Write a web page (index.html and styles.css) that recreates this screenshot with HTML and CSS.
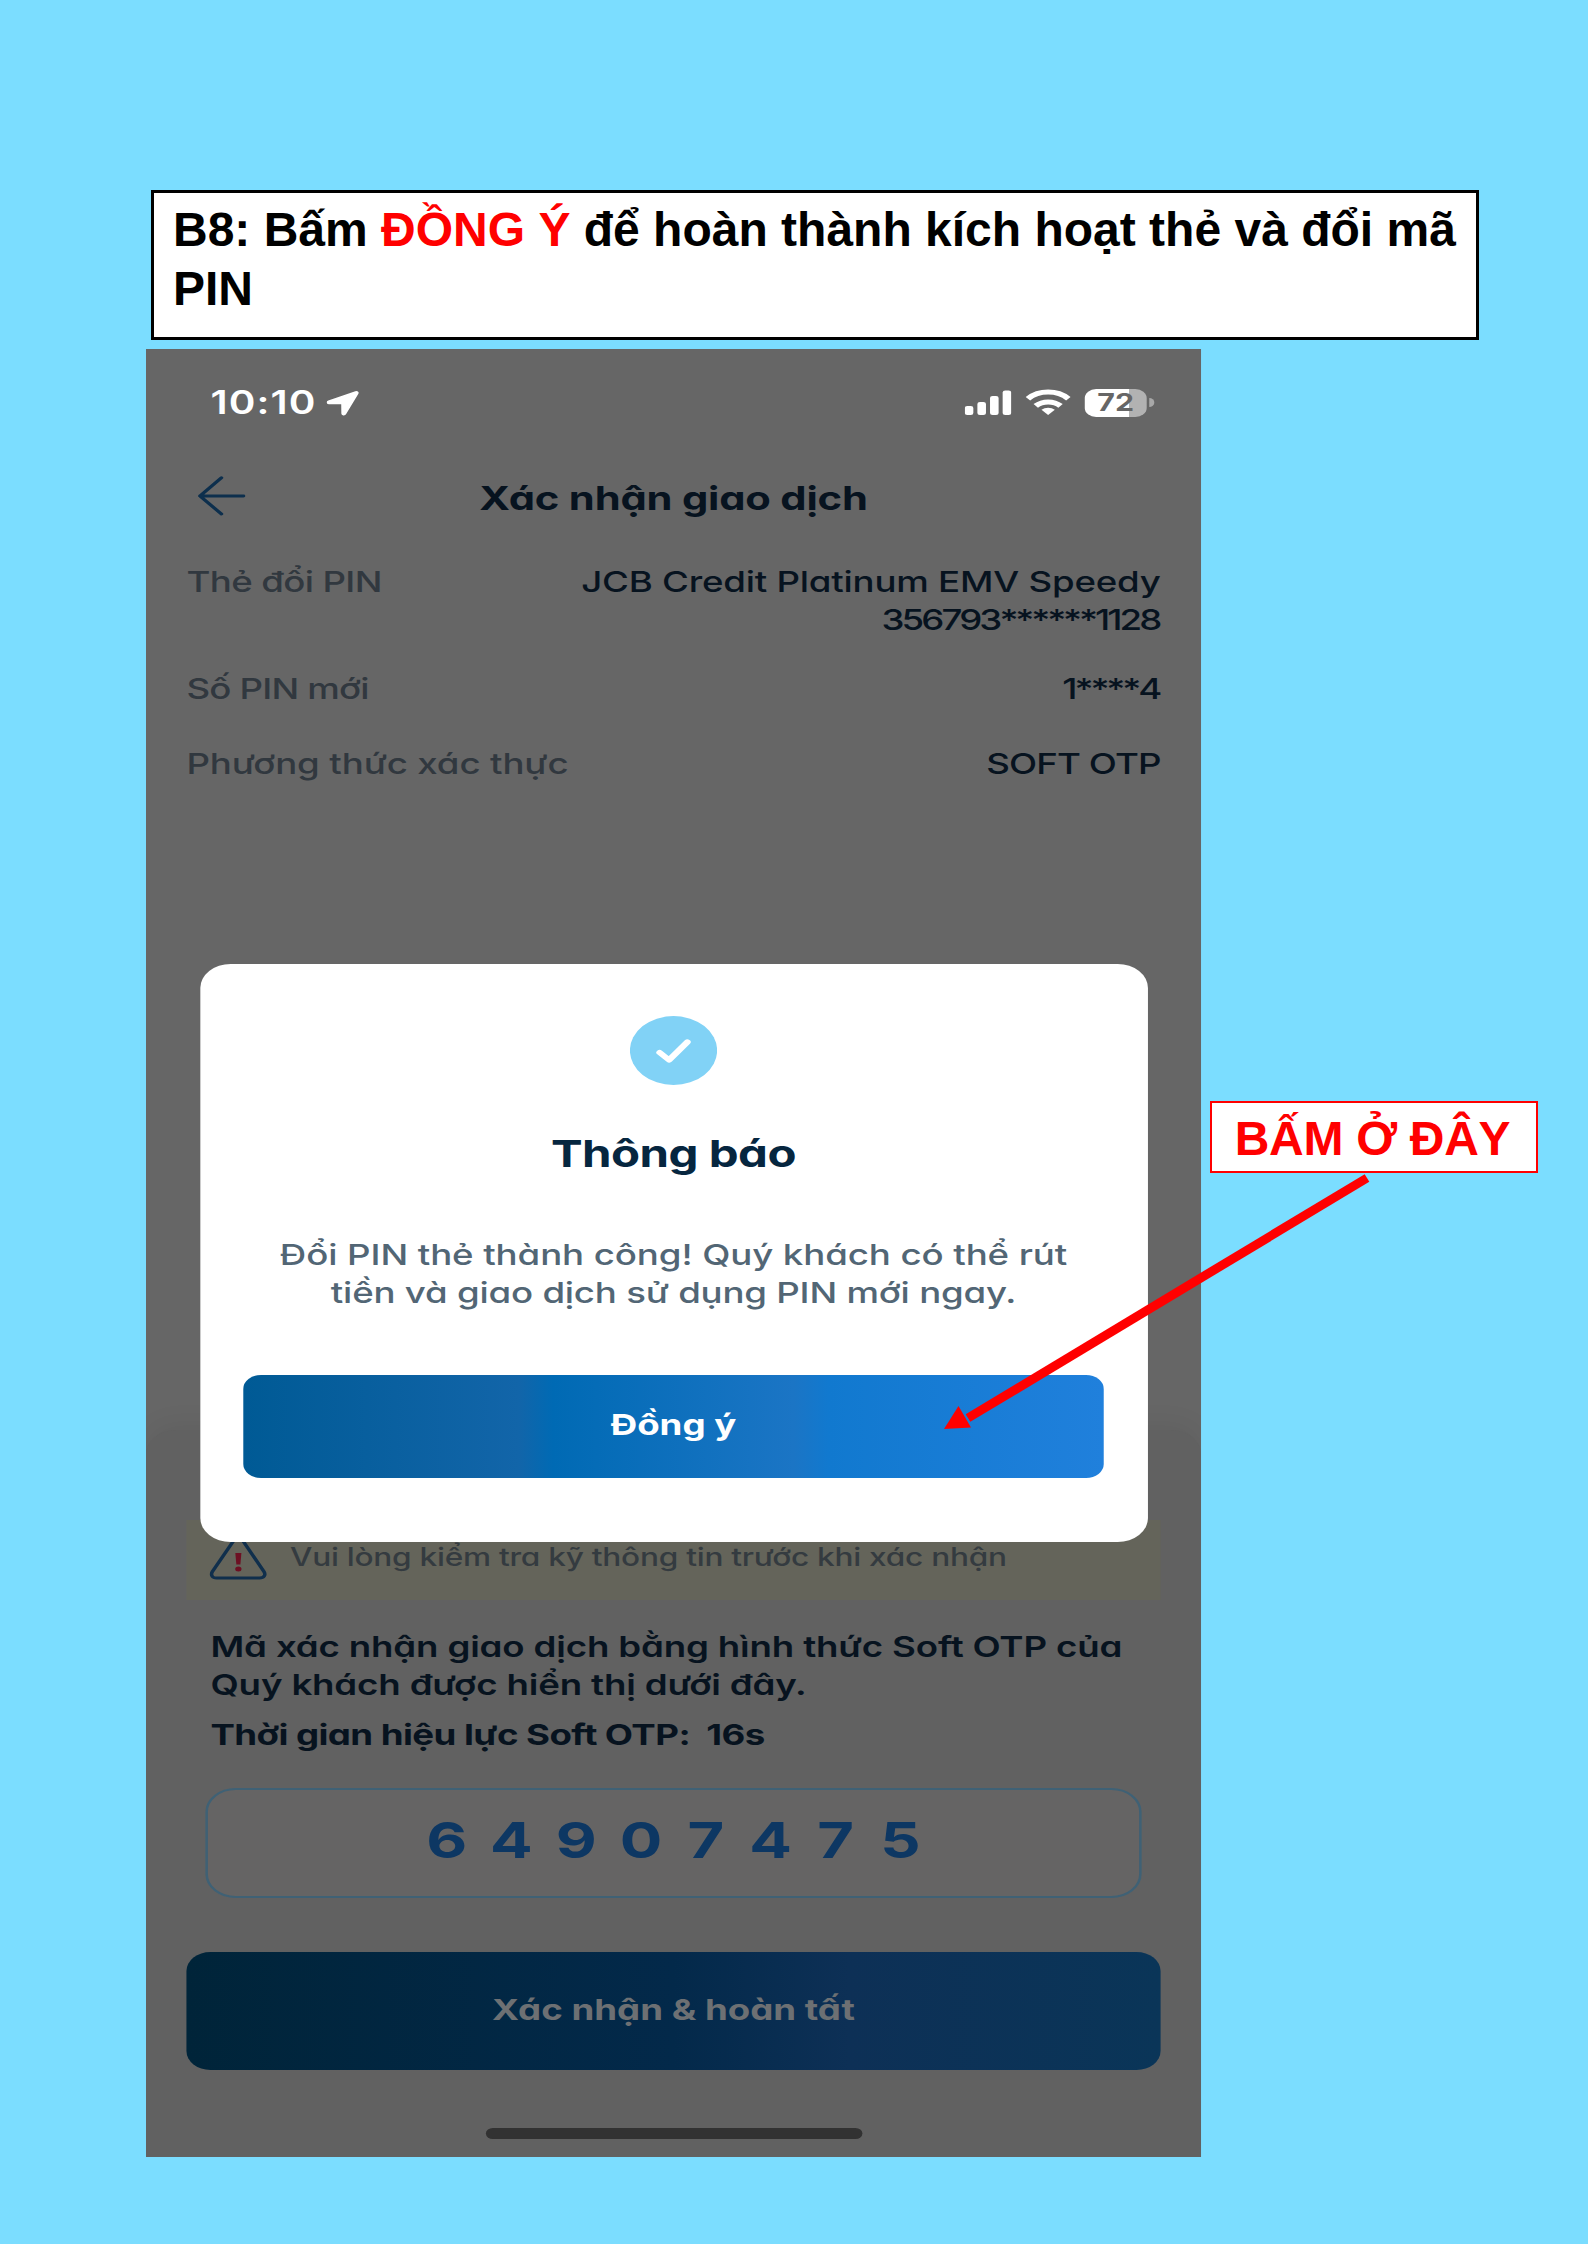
FILE: index.html
```html
<!DOCTYPE html>
<html lang="vi">
<head>
<meta charset="utf-8">
<title>B8: Hoàn thành kích hoạt thẻ và đổi mã PIN</title>
<link rel="stylesheet" href="styles.css">
</head>
<body>
<main class="page">
  <h1 class="step">B8: Bấm <span class="step-key">ĐỒNG Ý</span> để hoàn thành kích hoạt thẻ và đổi mã PIN</h1>

  <section class="phone">
    <div class="status">
      <span class="clock">10:10</span>
      <svg class="location" width="27" height="26" viewBox="0 0 27 26"><path d="M24 2 2.600 11.400c-1 .5-.8 1.900.3 1.900l9.800.1c.4 0 .7.300.7.700l.1 9.400c0 1.200 1.500 1.400 2 .4L25.300 3.300C25.700 2.300 24.900 1.600 24 2Z" fill="#fff" stroke="#fff" stroke-width="1.800" stroke-linejoin="round"/></svg>
      <svg class="signal" width="37" height="26" viewBox="0 0 37 26" fill="#fff"><rect x="0" y="16" width="6.800" height="9" rx="2"/><rect x="10" y="12" width="6.800" height="13" rx="2"/><rect x="20" y="6" width="6.800" height="19" rx="2"/><rect x="30" y="0.500" width="6.800" height="24.500" rx="2"/></svg>
      <svg class="wifi" width="36" height="27" viewBox="0 0 36 27" fill="none" stroke="#fff" stroke-width="5"><path d="M2 9.700a22.500 22.500 0 0 1 32 0"/><path d="M8.200 16.900a14 14 0 0 1 19.600 0"/><path d="M18 26.100 12.700 20.800a8 8 0 0 1 10.600 0Z" fill="#fff" stroke="none"/></svg>
      <span class="battery">72</span>
      <span class="battery-tip"></span>
    </div>

    <header class="topbar">
      <svg class="back" width="38" height="40" viewBox="0 0 38 40" fill="none" stroke="#0d2f4d" stroke-width="2.900" stroke-linecap="round" stroke-linejoin="round"><path d="M18.700 1.700 1.700 20l17 18M1.700 20h34.500"/></svg>
      <h2 class="title">Xác nhận giao dịch</h2>
    </header>

    <dl class="details">
      <div class="row row-card"><dt class="t-card">Thẻ đổi PIN</dt><dd><span class="v-card">JCB Credit Platinum EMV Speedy</span><br><span class="v-number">356793<span class="mask">******</span>1128</span></dd></div>
      <div class="row row-pin"><dt class="t-pin">Số PIN mới</dt><dd class="v-number">1<span class="mask">****</span>4</dd></div>
      <div class="row"><dt class="t-method">Phương thức xác thực</dt><dd class="v-otp">SOFT OTP</dd></div>
    </dl>

    <section class="sheet">
      <div class="warning">
        <svg class="alert" width="46" height="46" viewBox="0 0 46 46"><path d="M20 4.500 2.600 36.500C.9 39.900 2.400 43 6 43h33.800c3.600 0 5.300-3.100 3.500-6.500L26 4.500c-1.500-2.600-4.600-2.600-6 0Z" fill="none" stroke="#102f4c" stroke-width="2.800"/><path d="M20.700 18h4.800l-.8 11.500h-3.200Z" fill="#6d1023"/><circle cx="23.100" cy="33.900" r="2.500" fill="#6d1023"/></svg>
        <span>Vui lòng kiểm tra kỹ thông tin trước khi xác nhận</span>
      </div>
      <p class="notice">Mã xác nhận giao dịch bằng hình thức Soft OTP của<br>Quý khách được hiển thị dưới đây.</p>
      <p class="timer">Thời gian hiệu lực Soft OTP:&nbsp; 16s</p>
      <div class="otp"><span>6</span><span>4</span><span>9</span><span>0</span><span>7</span><span>4</span><span>7</span><span>5</span></div>
      <button class="submit">Xác nhận &amp; hoàn tất</button>
      <div class="home"></div>
    </section>

    <section class="modal">
      <svg class="done" width="69" height="69" viewBox="0 0 69 69"><circle cx="34.500" cy="34.500" r="34.500" fill="#81d2f6"/><path d="m23.500 36.500 7.500 7.500L45.500 26" fill="none" stroke="#fff" stroke-width="5.200" stroke-linecap="round" stroke-linejoin="round"/></svg>
      <h3 class="modal-title">Thông báo</h3>
      <p class="modal-text">Đổi PIN thẻ thành công! Quý khách có thể rút<br><span class="modal-text-end">tiền và giao dịch sử dụng PIN mới ngay.</span></p>
      <button class="agree">Đồng ý</button>
    </section>
  </section>

  <aside class="callout">BẤM Ở ĐÂY</aside>
  <svg class="pointer" width="440" height="270" viewBox="0 0 440 270"><path d="M427 13 28 253" stroke="#f00" stroke-width="9"/><path d="M4 264 18.500 241 31 262.600Z" fill="#f00"/></svg>
</main>
</body>
</html>
```
FILE: styles.css
```css
* { box-sizing: border-box; margin: 0; padding: 0; }

body { background: #7bddff; }

.page {
  position: relative;
  width: 1588px;
  height: 2244px;
  padding: 190px 109px 87px 146px;
  overflow: hidden;
  font-family: "Liberation Sans", Arial, sans-serif;
}

.step {
  height: 150px;
  margin-left: 5px;
  width: 1328px;
  padding: 7px 15px 0 19px;
  border: 3px solid #000;
  background: #fff;
  color: #000;
  font-size: 48px;
  font-weight: 700;
  line-height: 59px;
}
.step-key { color: #f00; }

/* The phone screen is laid out 835px wide and shown stretched horizontally. */
.phone {
  position: relative;
  display: flex;
  flex-direction: column;
  width: 835px;
  height: 1808px;
  margin-top: 9px;
  overflow: hidden;
  background: #666;
  transform: scaleX(1.2635);
  transform-origin: 0 0;
  font-family: Inter, "Noto Sans", sans-serif;
  font-feature-settings: "cv11";
  font-size: 29px;
  font-weight: 450;
  line-height: 38px;
  color: #07131f;
}

.status {
  display: flex;
  align-items: center;
  height: 107px;
  padding: 0 37px 0 51px;
}
.clock { width: 86px; font-size: 32px; font-weight: 600; letter-spacing: .9px; color: #fff; }
.location { margin-left: 5px; }
.signal { margin-left: auto; }
.wifi { margin-left: 11px; }
.battery {
  width: 49px;
  height: 28px;
  margin-left: 11px;
  border-radius: 9px;
  background: linear-gradient(90deg, #fff 72%, #b2b2b2 72%);
  color: #666;
  font-size: 24px;
  font-weight: 700;
  line-height: 28px;
  text-align: center;
}
.battery-tip { width: 4px; height: 9px; margin-left: 2px; border-radius: 0 5px 5px 0; background: #a8a8a8; }

.topbar {
  display: grid;
  grid-template-columns: 38px 1fr 38px;
  align-items: center;
  height: 84px;
  padding: 0 41px;
}
.back { margin-top: -4px; }
.title { font-size: 33px; font-weight: 700; letter-spacing: -.15px; text-align: center; }

.details { padding: 23px 32px 0; }
.row { display: flex; justify-content: space-between; }
.row dt { color: #31383f; }
.row dd { text-align: right; }
.row-card { margin-bottom: 31px; }
.row-pin { margin-bottom: 37px; }
.t-card { letter-spacing: -.5px; }
.t-pin { letter-spacing: -.65px; }
.t-method { letter-spacing: -.1px; }
.v-card { letter-spacing: -.17px; }
.v-number { letter-spacing: -2.3px; }
.row dd.v-number, dd .v-number { position: relative; left: -1px; }
.mask { letter-spacing: -2.5px; }
.v-otp { letter-spacing: -.7px; }

.sheet {
  display: flex;
  flex-direction: column;
  height: 727px;
  margin-top: auto;
  padding: 90px 32px 0;
  border-radius: 24px 24px 0 0;
  background: #616161;
  box-shadow: 0 -6px 24px rgba(0, 0, 0, .06);
}
.warning {
  display: flex;
  align-items: center;
  gap: 18px;
  height: 80px;
  padding: 0 18px 6px;
  background: #64645a;
  color: #343b40;
  font-size: 25px;
  letter-spacing: -.2px;
  white-space: nowrap;
}
.alert { margin-bottom: -2px; }
.notice { margin: 28px 0 0 19px; font-weight: 600; letter-spacing: -.12px; white-space: nowrap; }
.timer { margin: 12px 0 0 19px; font-weight: 700; letter-spacing: -.45px; }
.otp {
  display: flex;
  justify-content: center;
  align-items: center;
  height: 110px;
  margin: 34px 15px 0;
  padding-bottom: 6px;
  border: 2px solid #3f6175;
  border-radius: 24px;
  background: #656464;
  color: #0d3763;
  font-size: 50px;
  font-weight: 700;
}
.otp span { width: 51.300px; text-align: center; }
.submit {
  height: 118px;
  margin-top: 54px;
  padding-bottom: 3px;
  border: 0;
  border-radius: 19px;
  background: linear-gradient(90deg, #002439, #03294a 50%, #0d3056 68%, #0a3558);
  color: #6d7073;
  font: inherit;
  font-weight: 700;
  font-feature-settings: inherit;
}
.home { width: 298px; height: 11px; margin: 58px auto 0; border-radius: 6px; background: #323232; }

/* Confirmation dialog over the transaction screen */
.modal {
  position: absolute;
  top: 615px;
  left: 43px;
  right: 42px;
  display: flex;
  flex-direction: column;
  align-items: center;
  height: 578px;
  padding: 52px 1px 0 0;
  border-radius: 24px;
  background: #fff;
}
.modal-title { margin-top: 46px; font-size: 37.5px; font-weight: 700; line-height: 46px; letter-spacing: -.4px; color: #06263f; }
.modal-text { margin-top: 59px; color: #526675; text-align: center; white-space: nowrap; letter-spacing: -.07px; }
.modal-text-end { letter-spacing: -.17px; }
.agree {
  width: 681px;
  height: 103px;
  margin-top: 63px;
  padding-bottom: 3px;
  border: 0;
  border-radius: 14px;
  background: linear-gradient(90deg, #005a95, #1265a9 32%, #006ab4 36%, #1b75c5 64%, #1179cf 68%, #2080dc);
  color: #fff;
  font: inherit;
  font-weight: 700;
  font-feature-settings: inherit;
}

/* Annotations on top of the page */
.callout {
  position: absolute;
  left: 1210px;
  top: 1101px;
  width: 328px;
  height: 72px;
  padding-right: 3px;
  border: 2px solid #f00;
  background: #fff;
  color: #f00;
  font-size: 48px;
  font-weight: 700;
  line-height: 72px;
  letter-spacing: -.3px;
  text-align: center;
  white-space: nowrap;
}
.pointer { position: absolute; left: 940px; top: 1165px; }
```
